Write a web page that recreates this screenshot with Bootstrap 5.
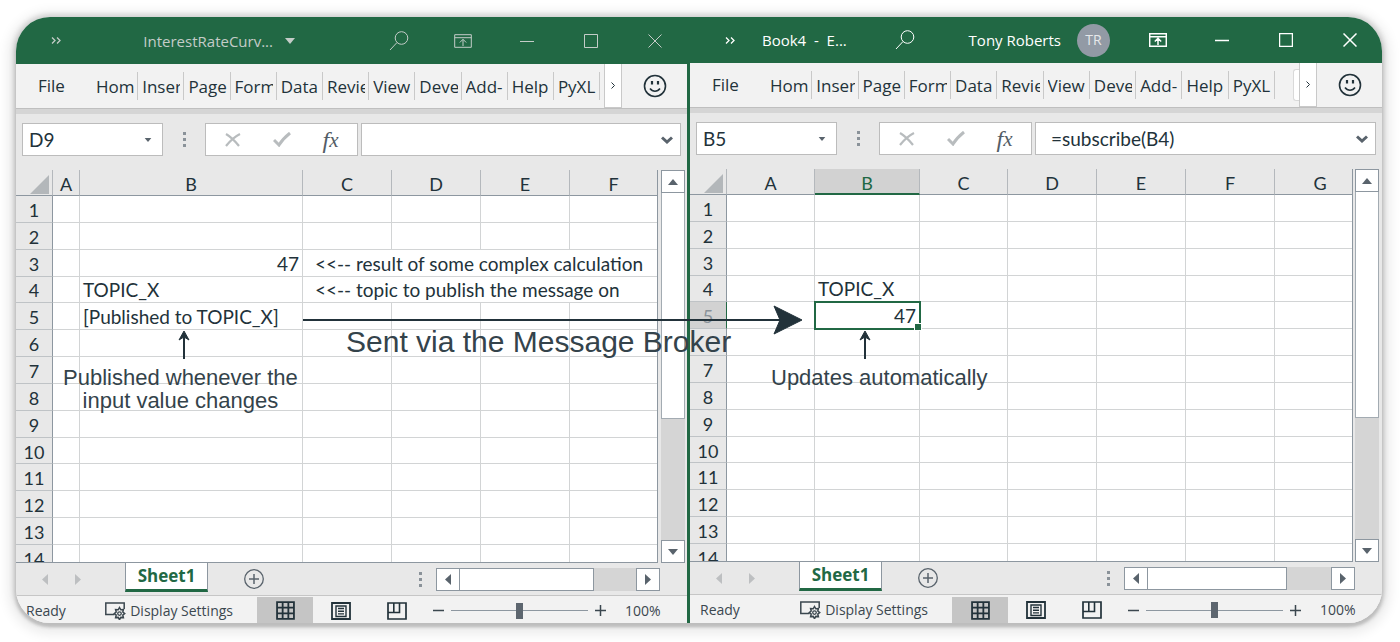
<!DOCTYPE html>
<html lang="en">
<head>
<meta charset="utf-8">
<meta name="viewport" content="width=device-width, initial-scale=1">
<title>Publish and subscribe between workbooks</title>
<link href="https://cdn.jsdelivr.net/npm/bootstrap@5.3.0/dist/css/bootstrap.min.css" rel="stylesheet">
<style>
  :root { --green: #216844; --ink: #22323a; --bar: #e8e8e8; --line: #b5b8bb; --edge: #8d97a0; }
  body { background: #fff; color: var(--ink); font-family: "Open Sans", "Noto Sans", sans-serif; font-size: 16px; line-height: 24px; }
  .desk { padding: 17px 18px 19px 16px; }
  .frame { position: relative; border-radius: 34px; box-shadow: 0 3px 3px 1px #bdbdbd, 0 0 4px 3px #d4d4d4, 0 3px 12px 8px #ececec; }
  .frame-in { border-radius: 34px; overflow: hidden; }
  .win { background: var(--bar); min-width: 0; flex: 671 1 0; }
  .win > * { flex-shrink: 0; }
  .win-active { flex: 692 1 0; border-left: 3px solid var(--green); }
  button { background: none; border: 0; padding: 0; color: inherit; line-height: 1; display: flex; align-items: center; justify-content: center; }
  svg { display: block; fill: none; stroke: currentColor; overflow: visible; }

  .titlebar { background: var(--green); color: #c4ccc8; height: 47px; font-size: 15px; }
  .win-active .titlebar { color: #fff; height: 46px; }
  .titlebar button { width: 64px; flex: none; }
  .doc-title { white-space: pre; }
  .avatar { width: 33px; height: 33px; border-radius: 50%; background: #929aa5; color: #e6e8ea; font-size: 14px; }

  .ribbon { background: #f2f2f2; height: 45px; font-size: 17px; border-bottom: 1px solid #bfbfbf; }
  .ribbon a { color: inherit; text-decoration: none; }
  .file-tab { width: 76px; padding-left: 22px; flex: none; }
  .tab-strip { flex: 1 1 0; min-width: 0; }
  .tab-item { flex: 1 1 0; min-width: 0; height: 28px; border-right: 1px solid #c9c9c9; padding: 0 3px 0 4px; }
  .tab-item a { display: block; overflow: hidden; white-space: nowrap; line-height: 30px; }
  .tab-more { width: 18px; height: 44px; background: #fff; border: 1px solid #c9c9c9; border-top: 0; flex: none; }
  .tab-box { width: 6px; height: 32px; background: #fff; border: 1px solid #d9d9d9; border-right: 0; border-radius: 3px 0 0 3px; margin-left: 18px; flex: none; }
  .smile { width: 65px; flex: none; }

  .fbar { border-top: 5px solid #d5d5d5; height: 61px; padding: 9px 6px 14px; }
  .field { background: #fff; border: 1px solid #bcbcbc; height: 33px; color: #59636c; }
  .field input { border: 0; outline: 0; background: none; width: 100%; min-width: 0; padding: 0 0 0 6px; color: var(--ink); font: 19px/24px Lato, "Noto Sans", sans-serif; }
  .namebox { width: 141px; flex: none; }
  .namebox button { width: 28px; flex: none; }
  .fx { width: 153px; flex: none; padding: 0 2px; color: #b8bcbe; }
  .fx button { width: 49px; }
  .fx .fn { color: #535d66; font: italic 24px/26px "Liberation Serif", serif; }
  .dots { width: 42px; color: #8a9299; flex: none; }
  .formula { margin-left: 3px; }
  .formula input { padding-left: 15px; }
  .formula button { width: 26px; flex: none; }

  .sheet { height: 393px; }
  .grid { overflow: hidden; border-right: 1px solid var(--edge); border-bottom: 1px solid var(--edge); }
  .cells { table-layout: fixed; width: 100%; height: 402px; border-collapse: separate; border-spacing: 0; background: #fff; font: 19px/20px Lato, "Noto Sans", sans-serif; }
  .cells th, .cells td { padding: 0 3px; border-right: 1px solid #d2d4d5; border-bottom: 1px solid #d2d4d5; white-space: nowrap; font-weight: 400; height: 26px; vertical-align: middle; }
  .cells thead th { background: var(--bar); border-right-color: #b4b8bc; border-bottom-color: var(--edge); text-align: center; font-size: 18px; padding-top: 3px; }
  .cells tbody th { background: var(--bar); border-right-color: var(--edge); border-bottom-color: #bfc3c6; text-align: center; font-size: 18px; padding: 2px 3px 0; }
  .cells td { padding-top: 2px; }
  .cells td:last-child, .cells thead th:last-child { border-right: 0; }
  .cells thead th.pick { background: #d2d2d2; color: var(--green); border-bottom: 2px solid var(--green); }
  .cells tbody th.pick { background: #d2d2d2; color: #8a9299; border-right-color: var(--green); }
  .cells .corner svg { margin-left: auto; }
  .cells .note { padding-left: 12px; }
  .cells .cur { position: relative; outline: 2px solid var(--green); outline-offset: -1px; }
  .cur::after { content: ""; position: absolute; right: -3px; bottom: -3px; width: 6px; height: 6px; background: var(--green); border: 1px solid #fff; box-sizing: content-box; }

  .vbar { width: 24px; margin: 0 2px 0 3px; flex: none; background: #d5d5d5; }
  .win-active .vbar { margin: 0 3px 0 2px; }
  .knob { background: #fff; border: 1px solid var(--edge); width: 24px; height: 23px; flex: none; color: #59636c; }
  .vthumb { background: #fff; border: 1px solid #a3abb2; border-top: 0; height: 226px; }

  .tabbar { height: 32px; padding-left: 12px; }
  .tabbar .arrow { width: 33px; color: #bdbfc1; }
  .tabbar .dots { width: 30px; }
  .sheet-tab { width: 83px; height: 29px; background: #fff; border: 1px solid var(--edge); border-top: 0; border-bottom: 3px solid var(--green); color: var(--green); font-weight: 700; font-size: 17px; text-decoration: none; margin-left: 31px; }
  .add-sheet { margin-left: 36px; color: #59636c; }
  .hbar { width: 34%; background: #d5d5d5; height: 23px; margin-right: 27px; }
  .hthumb { width: 60%; background: #fff; border: 1px solid var(--edge); border-left: 0; }

  .status { background: #f2f2f2; border-top: 1px solid #c6c6c6; height: 28px; font-size: 14px; color: #3b474f; padding: 2px 26px 0 10px; }
  .view { width: 56px; height: 27px; color: var(--ink); }
  .view.on { background: #c5c5c5; }
  .zoom input { appearance: none; width: 137px; height: 16px; margin: 0 7px; background: linear-gradient(#8d97a0, #8d97a0) center / 100% 1px no-repeat; }
  .zoom input::-webkit-slider-thumb { appearance: none; width: 7px; height: 16px; background: #5d666f; }
  .pct { width: 36px; margin-left: 19px; }

  .callout { position: absolute; font: 22px/23px "Liberation Sans", Arial, sans-serif; text-align: center; white-space: nowrap; color: #34434b; margin: 0; }
  .callout-main { font-size: 30px; line-height: 32px; }
  .ink { position: absolute; color: var(--ink); }
</style>
</head>
<body>
<svg width="0" height="0" class="position-absolute" aria-hidden="true">
  <symbol id="search" viewBox="0 0 20 20"><circle cx="12.500" cy="7" r="6.300"/><path d="M8 11.500 1 19"/></symbol>
  <symbol id="ribbon-up" viewBox="0 0 18 14"><path d="M.7.7h16.600v12.600H.7zM.7 3.700h16.600M9 12V5.500M5.800 8.500 9 5.300l3.200 3.200"/></symbol>
  <symbol id="min" viewBox="0 0 14 14"><path d="M0 7.500h14"/></symbol>
  <symbol id="max" viewBox="0 0 14 14"><path d="M.5.5h13v13H.5z"/></symbol>
  <symbol id="close" viewBox="0 0 14 14"><path d="m.5.500 13 13m0-13-13 13"/></symbol>
  <symbol id="smiley" viewBox="0 0 24 24"><circle cx="12" cy="12" r="10.500" stroke-width="1.600"/><path d="M9 7v3.500M15 7v3.500" stroke-width="2.200"/><path d="M7 14.500c2.500 3.600 7.500 3.600 10 0" stroke-width="1.600"/></symbol>
  <symbol id="dots3" viewBox="0 0 3 15"><path d="M0 1.500h3M0 7.500h3M0 13.500h3" stroke-width="3"/></symbol>
  <symbol id="cross" viewBox="0 0 16 14"><path d="M1 1c5 3 9 7 13 12M15 1C9 4 5 8 1 13" stroke-width="2.200"/></symbol>
  <symbol id="tick" viewBox="0 0 18 15"><path d="m1 8 5 5C9 8 12 5 17 1" stroke-width="3"/></symbol>
  <symbol id="chev" viewBox="0 0 12 8"><path d="m1 1.500 5 4.500 5-4.500" stroke-width="3"/></symbol>
  <symbol id="plus-o" viewBox="0 0 20 20"><circle cx="10" cy="10" r="9.300" stroke-width="1.300"/><path d="M10 5v10M5 10h10" stroke-width="1.500"/></symbol>
  <symbol id="display" viewBox="0 0 21 18"><path d="M9 12.500H.8V1h18.400v6M3.500 12.500h6" stroke-width="1.500"/><path d="m14.500 5.500 1.300 2.300 2.600-.3-.6 2.500 1.900 1.500-1.900 1.600.6 2.500-2.600-.2-1.300 2.300-1.300-2.300-2.600.2.600-2.500-1.900-1.600 1.900-1.500-.6-2.500 2.600.3z" stroke-width="1.500"/><circle cx="14.500" cy="11.600" r="1.800" stroke-width="1.300"/></symbol>
  <symbol id="v-grid" viewBox="0 0 18 18"><path d="M1 1h16v16H1zM6.300 1v16M11.700 1v16M1 6.300h16M1 11.700h16" stroke-width="1.700"/></symbol>
  <symbol id="v-page" viewBox="0 0 20 18"><path d="M1 1h18v16H1z" stroke-width="1.800"/><path d="M5 4h10v10.500H5zM7 6.500h6M7 9.200h6M7 11.900h6" stroke-width="1.400"/></symbol>
  <symbol id="v-break" viewBox="0 0 20 18"><path d="M1 1h18v16H1z" stroke-width="1.700"/><path d="M1 10.500h11.500V1M6.800 1v9.500" stroke-width="1.600"/></symbol>
  <symbol id="t-up" viewBox="0 0 10 6"><path d="M0 6 5 0l5 6z" fill="currentColor" stroke="none"/></symbol>
  <symbol id="t-down" viewBox="0 0 10 6"><path d="m0 0 5 6 5-6z" fill="currentColor" stroke="none"/></symbol>
  <symbol id="t-left" viewBox="0 0 6 11"><path d="M6 0v11L0 5.500z" fill="currentColor" stroke="none"/></symbol>
  <symbol id="t-right" viewBox="0 0 6 11"><path d="M0 0v11l6-5.500z" fill="currentColor" stroke="none"/></symbol>
  <symbol id="t-corner" viewBox="0 0 19 19"><path d="M19 0v19H0z" fill="#b3b7ba" stroke="none"/></symbol>
  <symbol id="more" viewBox="0 0 4 7"><path d="m.5.500 3 3-3 3"/></symbol>
  <symbol id="more2" viewBox="0 0 11 7"><path d="m1 .5 3 3-3 3m5-6 3 3-3 3" stroke-width="1.300"/></symbol>
</svg>

<main class="desk">
<div class="frame">
<div class="frame-in d-flex">

  <section class="win d-flex flex-column" aria-label="InterestRateCurves workbook">
    <header class="titlebar d-flex align-items-center">
      <button aria-label="More commands" class="ms-2"><svg width="11" height="7"><use href="#more2"/></svg></button>
      <div class="doc-title ms-auto">InterestRateCurv...</div>
      <svg class="ms-2 ps-1 me-4" width="14" height="6"><use href="#t-down"/></svg>
      <button aria-label="Search" class="ms-5"><svg width="20" height="20"><use href="#search"/></svg></button>
      <button aria-label="Ribbon display options"><svg width="18" height="14"><use href="#ribbon-up"/></svg></button>
      <button aria-label="Minimize"><svg width="14" height="14"><use href="#min"/></svg></button>
      <button aria-label="Maximize"><svg width="14" height="14"><use href="#max"/></svg></button>
      <button aria-label="Close"><svg width="14" height="14"><use href="#close"/></svg></button>
    </header>
    <nav class="ribbon d-flex align-items-center">
      <a href="#" class="file-tab">File</a>
      <div class="tab-strip d-flex">
        <div class="tab-item"><a href="#">Hom</a></div><div class="tab-item"><a href="#">Inser</a></div><div class="tab-item"><a href="#">Page</a></div><div class="tab-item"><a href="#">Form</a></div><div class="tab-item"><a href="#">Data</a></div><div class="tab-item"><a href="#">Revie</a></div><div class="tab-item"><a href="#">View</a></div><div class="tab-item"><a href="#">Deve</a></div><div class="tab-item"><a href="#">Add-</a></div><div class="tab-item"><a href="#">Help</a></div><div class="tab-item"><a href="#">PyXL</a></div>
      </div>
      <button class="tab-more ms-1" aria-label="Scroll tabs"><svg width="4" height="7"><use href="#more"/></svg></button>
      <button class="smile" aria-label="Feedback"><svg width="24" height="24"><use href="#smiley"/></svg></button>
    </nav>
    <div class="fbar d-flex align-items-center">
      <div class="field namebox d-flex"><input value="D9" aria-label="Name box"><button aria-label="Names"><svg width="8" height="4"><use href="#t-down"/></svg></button></div>
      <div class="dots d-flex justify-content-center"><svg width="3" height="15"><use href="#dots3"/></svg></div>
      <div class="field fx d-flex"><button aria-label="Cancel"><svg width="16" height="14"><use href="#cross"/></svg></button><button aria-label="Enter"><svg width="18" height="15"><use href="#tick"/></svg></button><button class="fn" aria-label="Insert function">f<small>x</small></button></div>
      <div class="field formula d-flex flex-grow-1"><input value="" aria-label="Formula"><button aria-label="Expand"><svg width="12" height="8"><use href="#chev"/></svg></button></div>
    </div>
    <div class="sheet d-flex">
      <div class="grid flex-grow-1">
        <table class="cells">
          <colgroup><col style="width:37px"><col style="width:27px"><col style="width:223px"><col style="width:89px"><col style="width:89px"><col style="width:89px"><col></colgroup>
          <thead><tr><th class="corner"><svg width="19" height="19"><use href="#t-corner"/></svg></th><th>A</th><th>B</th><th>C</th><th>D</th><th>E</th><th>F</th></tr></thead>
          <tbody>
            <tr><th>1</th><td></td><td></td><td></td><td></td><td></td><td></td></tr>
            <tr><th>2</th><td></td><td></td><td></td><td></td><td></td><td></td></tr>
            <tr><th>3</th><td></td><td class="text-end">47</td><td colspan="4" class="note">&lt;&lt;-- result of some complex calculation</td></tr>
            <tr><th>4</th><td></td><td>TOPIC_X</td><td colspan="4" class="note">&lt;&lt;-- topic to publish the message on</td></tr>
            <tr><th>5</th><td></td><td>[Published to TOPIC_X]</td><td></td><td></td><td></td><td></td></tr>
            <tr><th>6</th><td></td><td></td><td></td><td></td><td></td><td></td></tr>
            <tr><th>7</th><td></td><td></td><td></td><td></td><td></td><td></td></tr>
            <tr><th>8</th><td></td><td></td><td></td><td></td><td></td><td></td></tr>
            <tr><th>9</th><td></td><td></td><td></td><td></td><td></td><td></td></tr>
            <tr><th>10</th><td></td><td></td><td></td><td></td><td></td><td></td></tr>
            <tr><th>11</th><td></td><td></td><td></td><td></td><td></td><td></td></tr>
            <tr><th>12</th><td></td><td></td><td></td><td></td><td></td><td></td></tr>
            <tr><th>13</th><td></td><td></td><td></td><td></td><td></td><td></td></tr>
            <tr><th>14</th><td></td><td></td><td></td><td></td><td></td><td></td></tr>
          </tbody>
        </table>
      </div>
      <div class="vbar d-flex flex-column"><button class="knob" aria-label="Scroll up"><svg width="10" height="6"><use href="#t-up"/></svg></button><div class="vthumb"></div><button class="knob mt-auto" aria-label="Scroll down"><svg width="10" height="6"><use href="#t-down"/></svg></button></div>
    </div>
    <div class="tabbar d-flex align-items-center">
      <button class="arrow" aria-label="Previous sheet"><svg width="6" height="11"><use href="#t-left"/></svg></button><button class="arrow" aria-label="Next sheet"><svg width="6" height="11"><use href="#t-right"/></svg></button>
      <a href="#" class="sheet-tab d-flex align-items-center justify-content-center align-self-start">Sheet1</a>
      <button class="add-sheet" aria-label="New sheet"><svg width="20" height="20"><use href="#plus-o"/></svg></button>
      <div class="dots ms-auto d-flex justify-content-center"><svg width="3" height="15"><use href="#dots3"/></svg></div>
      <div class="hbar d-flex"><button class="knob" aria-label="Scroll left"><svg width="6" height="11"><use href="#t-left"/></svg></button><div class="hthumb"></div><button class="knob ms-auto" aria-label="Scroll right"><svg width="6" height="11"><use href="#t-right"/></svg></button></div>
    </div>
    <footer class="status d-flex align-items-center flex-grow-1">
      <span>Ready</span>
      <button class="ms-auto me-4 gap-1"><svg width="21" height="18"><use href="#display"/></svg>Display Settings</button>
      <button class="view on" aria-label="Normal view"><svg width="19" height="19"><use href="#v-grid"/></svg></button><button class="view" aria-label="Page layout"><svg width="20" height="18"><use href="#v-page"/></svg></button><button class="view" aria-label="Page break preview"><svg width="20" height="18"><use href="#v-break"/></svg></button>
      <div class="zoom d-flex align-items-center ms-1 ps-1"><svg width="11" height="11" viewBox="0 0 11 11"><path d="M0 5.500h11" stroke-width="1.500"/></svg><input type="range" value="50" aria-label="Zoom"><svg width="11" height="11" viewBox="0 0 11 11"><path d="M0 5.500h11M5.500 0v11" stroke-width="1.500"/></svg></div>
      <span class="pct">100%</span>
    </footer>
  </section>

  <section class="win win-active d-flex flex-column" aria-label="Book4 workbook">
    <header class="titlebar d-flex align-items-center">
      <button aria-label="More commands" class="ms-2"><svg width="11" height="7"><use href="#more2"/></svg></button>
      <div class="doc-title">Book4  -  E...</div>
      <button aria-label="Search" class="ms-auto me-3"><svg width="20" height="20"><use href="#search"/></svg></button>
      <span class="ms-3 me-3">Tony Roberts</span>
      <span class="avatar d-flex align-items-center justify-content-center">TR</span>
      <button aria-label="Ribbon display options" class="ms-3"><svg width="18" height="14" stroke-width="1.500"><use href="#ribbon-up"/></svg></button>
      <button aria-label="Minimize"><svg width="14" height="14" stroke-width="1.500"><use href="#min"/></svg></button>
      <button aria-label="Maximize"><svg width="14" height="14" stroke-width="1.500"><use href="#max"/></svg></button>
      <button aria-label="Close"><svg width="14" height="14" stroke-width="1.500"><use href="#close"/></svg></button>
    </header>
    <nav class="ribbon d-flex align-items-center">
      <a href="#" class="file-tab">File</a>
      <div class="tab-strip d-flex">
        <div class="tab-item"><a href="#">Hom</a></div><div class="tab-item"><a href="#">Inser</a></div><div class="tab-item"><a href="#">Page</a></div><div class="tab-item"><a href="#">Form</a></div><div class="tab-item"><a href="#">Data</a></div><div class="tab-item"><a href="#">Revie</a></div><div class="tab-item"><a href="#">View</a></div><div class="tab-item"><a href="#">Deve</a></div><div class="tab-item"><a href="#">Add-</a></div><div class="tab-item"><a href="#">Help</a></div><div class="tab-item"><a href="#">PyXL</a></div>
      </div>
      <div class="tab-box"></div>
      <button class="tab-more" aria-label="Scroll tabs"><svg width="4" height="7"><use href="#more"/></svg></button>
      <button class="smile" aria-label="Feedback"><svg width="24" height="24"><use href="#smiley"/></svg></button>
    </nav>
    <div class="fbar d-flex align-items-center">
      <div class="field namebox d-flex"><input value="B5" aria-label="Name box"><button aria-label="Names"><svg width="8" height="4"><use href="#t-down"/></svg></button></div>
      <div class="dots d-flex justify-content-center"><svg width="3" height="15"><use href="#dots3"/></svg></div>
      <div class="field fx d-flex"><button aria-label="Cancel"><svg width="16" height="14"><use href="#cross"/></svg></button><button aria-label="Enter"><svg width="18" height="15"><use href="#tick"/></svg></button><button class="fn" aria-label="Insert function">f<small>x</small></button></div>
      <div class="field formula d-flex flex-grow-1"><input value="=subscribe(B4)" aria-label="Formula"><button aria-label="Expand"><svg width="12" height="8"><use href="#chev"/></svg></button></div>
    </div>
    <div class="sheet d-flex">
      <div class="grid flex-grow-1">
        <table class="cells">
          <colgroup><col style="width:37px"><col style="width:88px"><col style="width:105px"><col style="width:88px"><col style="width:89px"><col style="width:89px"><col style="width:89px"><col></colgroup>
          <thead><tr><th class="corner"><svg width="19" height="19"><use href="#t-corner"/></svg></th><th>A</th><th class="pick">B</th><th>C</th><th>D</th><th>E</th><th>F</th><th class="ps-3">G</th></tr></thead>
          <tbody>
            <tr><th>1</th><td></td><td></td><td></td><td></td><td></td><td></td><td></td></tr>
            <tr><th>2</th><td></td><td></td><td></td><td></td><td></td><td></td><td></td></tr>
            <tr><th>3</th><td></td><td></td><td></td><td></td><td></td><td></td><td></td></tr>
            <tr><th>4</th><td></td><td>TOPIC_X</td><td></td><td></td><td></td><td></td><td></td></tr>
            <tr><th class="pick">5</th><td></td><td class="cur text-end">47</td><td></td><td></td><td></td><td></td><td></td></tr>
            <tr><th></th><td></td><td></td><td></td><td></td><td></td><td></td><td></td></tr>
            <tr><th>7</th><td></td><td></td><td></td><td></td><td></td><td></td><td></td></tr>
            <tr><th>8</th><td></td><td></td><td></td><td></td><td></td><td></td><td></td></tr>
            <tr><th>9</th><td></td><td></td><td></td><td></td><td></td><td></td><td></td></tr>
            <tr><th>10</th><td></td><td></td><td></td><td></td><td></td><td></td><td></td></tr>
            <tr><th>11</th><td></td><td></td><td></td><td></td><td></td><td></td><td></td></tr>
            <tr><th>12</th><td></td><td></td><td></td><td></td><td></td><td></td><td></td></tr>
            <tr><th>13</th><td></td><td></td><td></td><td></td><td></td><td></td><td></td></tr>
            <tr><th>14</th><td></td><td></td><td></td><td></td><td></td><td></td><td></td></tr>
          </tbody>
        </table>
      </div>
      <div class="vbar d-flex flex-column"><button class="knob" aria-label="Scroll up"><svg width="10" height="6"><use href="#t-up"/></svg></button><div class="vthumb"></div><button class="knob mt-auto" aria-label="Scroll down"><svg width="10" height="6"><use href="#t-down"/></svg></button></div>
    </div>
    <div class="tabbar d-flex align-items-center">
      <button class="arrow" aria-label="Previous sheet"><svg width="6" height="11"><use href="#t-left"/></svg></button><button class="arrow" aria-label="Next sheet"><svg width="6" height="11"><use href="#t-right"/></svg></button>
      <a href="#" class="sheet-tab d-flex align-items-center justify-content-center align-self-start">Sheet1</a>
      <button class="add-sheet" aria-label="New sheet"><svg width="20" height="20"><use href="#plus-o"/></svg></button>
      <div class="dots ms-auto d-flex justify-content-center"><svg width="3" height="15"><use href="#dots3"/></svg></div>
      <div class="hbar d-flex"><button class="knob" aria-label="Scroll left"><svg width="6" height="11"><use href="#t-left"/></svg></button><div class="hthumb"></div><button class="knob ms-auto" aria-label="Scroll right"><svg width="6" height="11"><use href="#t-right"/></svg></button></div>
    </div>
    <footer class="status d-flex align-items-center flex-grow-1">
      <span>Ready</span>
      <button class="ms-auto me-4 gap-1"><svg width="21" height="18"><use href="#display"/></svg>Display Settings</button>
      <button class="view on" aria-label="Normal view"><svg width="19" height="19"><use href="#v-grid"/></svg></button><button class="view" aria-label="Page layout"><svg width="20" height="18"><use href="#v-page"/></svg></button><button class="view" aria-label="Page break preview"><svg width="20" height="18"><use href="#v-break"/></svg></button>
      <div class="zoom d-flex align-items-center ms-1 ps-1"><svg width="11" height="11" viewBox="0 0 11 11"><path d="M0 5.500h11" stroke-width="1.500"/></svg><input type="range" value="50" aria-label="Zoom"><svg width="11" height="11" viewBox="0 0 11 11"><path d="M0 5.500h11M5.500 0v11" stroke-width="1.500"/></svg></div>
      <span class="pct">100%</span>
    </footer>
  </section>
</div>

<!-- annotations drawn over both windows -->
<svg class="ink" style="left:287px;top:288px" width="500" height="30" viewBox="0 0 500 30"><path d="M0 15h480" stroke-width="2"/><path d="M471 1l28 14-28 14 6-14z" fill="currentColor"/></svg>
<svg class="ink" style="left:161px;top:314px" width="14" height="28" viewBox="0 0 14 28"><path d="M7 28V5" stroke-width="2"/><path d="M7 0l5 9-5-3-5 3z" fill="currentColor" stroke-width="1"/></svg>
<svg class="ink" style="left:842px;top:314px" width="14" height="28" viewBox="0 0 14 28"><path d="M7 28V5" stroke-width="2"/><path d="M7 0l5 9-5-3-5 3z" fill="currentColor" stroke-width="1"/></svg>
<p class="callout callout-main" style="left:330px;top:309px">Sent via the Message Broker</p>
<p class="callout" style="left:47px;top:349px">Published whenever the<br>input value changes</p>
<p class="callout" style="left:755px;top:349px">Updates automatically</p>
</div>
</main>
<script src="https://cdn.jsdelivr.net/npm/bootstrap@5.3.0/dist/js/bootstrap.bundle.min.js"></script>
</body>
</html>
